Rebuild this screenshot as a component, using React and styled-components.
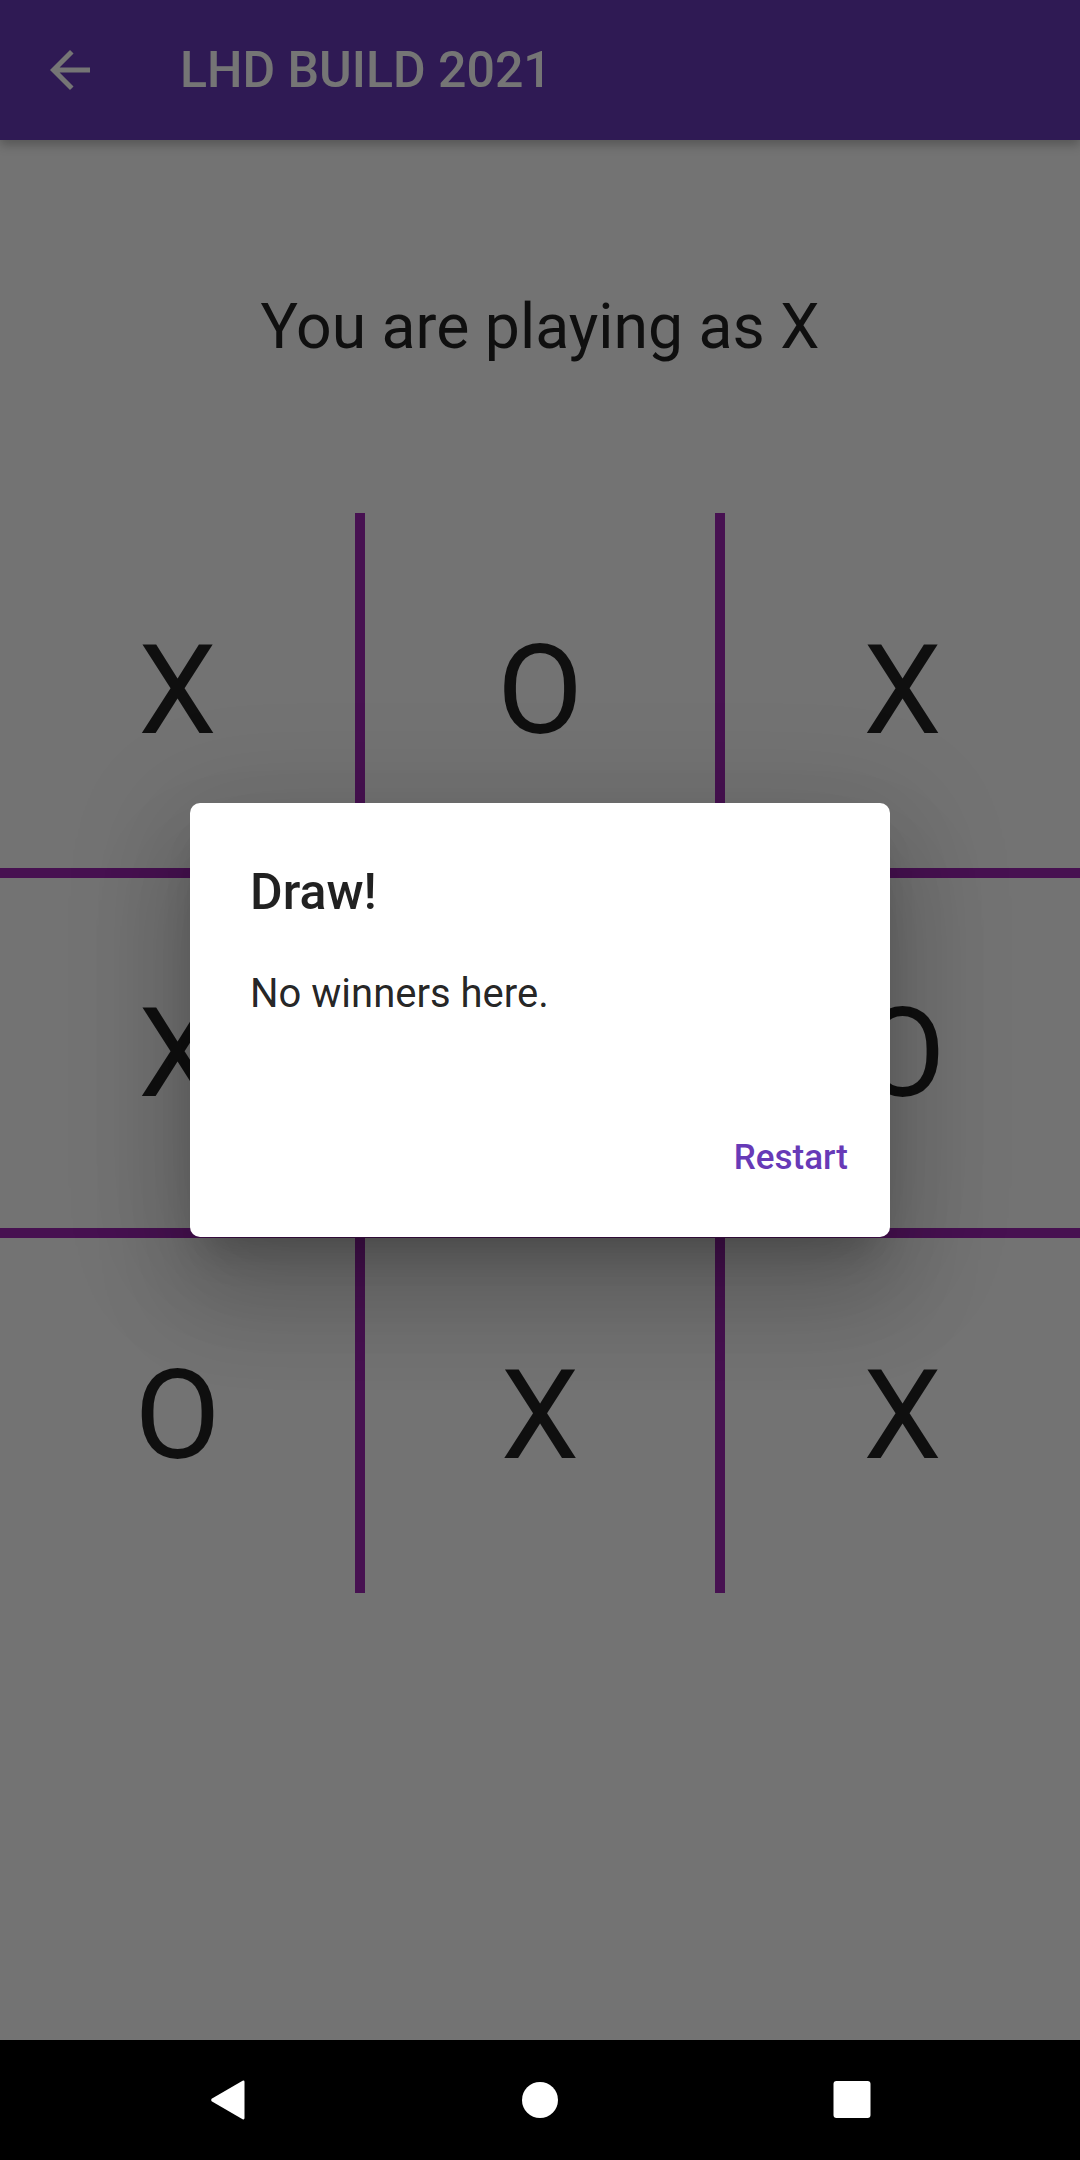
import React from "react";
import styled, { createGlobalStyle } from "styled-components";

const GlobalStyle = createGlobalStyle`
  html, body {
    margin: 0;
    padding: 0;
    background: #000000;
  }
  body {
    font-family: Roboto, "Noto Sans", "Liberation Sans", sans-serif;
  }
`;

// Layout
const Screen = styled.div`
  position: relative;
  width: 1080px;
  height: 2160px;
  display: flex;
  flex-direction: column;
  overflow: hidden;
`;

const AppBar = styled.header`
  height: 140px;
  flex-shrink: 0;
  background-color: #673ab7;
  display: flex;
  align-items: center;
  box-shadow: 0 5px 10px rgba(0, 0, 0, 0.25);
  position: relative;
  z-index: 1;
`;

const BackButton = styled.button`
  width: 60px;
  height: 60px;
  margin-left: 40px;
  padding: 0;
  border: none;
  background: none;
  display: flex;
  color: #ffffff;
`;

const AppTitle = styled.h1`
  margin: 0 0 0 80px;
  font-size: 50px;
  font-weight: 500;
  color: #ffffff;
`;

const Body = styled.main`
  flex: 1;
  background-color: #fafafa;
  display: flex;
  flex-direction: column;
`;

const Status = styled.div`
  height: 373px;
  display: flex;
  align-items: center;
  justify-content: center;
  font-size: 62.5px;
  color: rgba(0, 0, 0, 0.87);
`;

const Board = styled.div`
  display: grid;
  grid-template-columns: repeat(3, 360px);
  grid-template-rows: repeat(3, 360px);
`;

const Cell = styled.div`
  box-sizing: border-box;
  display: flex;
  align-items: center;
  justify-content: center;
  font-size: 125px;
  color: rgba(0, 0, 0, 0.87);
  border: 0 solid #9c27b0;
  border-left-width: ${(p) => (p.col > 0 ? "5px" : "0")};
  border-right-width: ${(p) => (p.col < 2 ? "5px" : "0")};
  border-top-width: ${(p) => (p.row > 0 ? "5px" : "0")};
  border-bottom-width: ${(p) => (p.row < 2 ? "5px" : "0")};
`;

// Dialog
const Scrim = styled.div`
  position: absolute;
  left: 0;
  top: 0;
  width: 1080px;
  height: 2040px;
  background-color: rgba(0, 0, 0, 0.54);
  display: flex;
  align-items: center;
  justify-content: center;
  z-index: 2;
`;

const Dialog = styled.div`
  width: 700px;
  background-color: #ffffff;
  border-radius: 10px;
  box-shadow: 0 27px 37px -17px rgba(0, 0, 0, 0.2),
    0 60px 95px 7px rgba(0, 0, 0, 0.14), 0 22px 115px 20px rgba(0, 0, 0, 0.12);
`;

const DialogTitle = styled.h2`
  margin: 0;
  padding: 60px 60px 0;
  font-size: 50px;
  font-weight: 500;
  line-height: normal;
  color: rgba(0, 0, 0, 0.87);
`;

const DialogContent = styled.p`
  margin: 0;
  padding: 49px 60px 60px;
  font-size: 40px;
  line-height: normal;
  color: rgba(0, 0, 0, 0.87);
`;

const DialogActions = styled.div`
  height: 160px;
  display: flex;
  align-items: center;
  justify-content: flex-end;
  padding-right: 20px;
`;

const TextButton = styled.button`
  border: none;
  background: none;
  padding: 0 22px;
  font-family: Roboto, "Noto Sans", sans-serif;
  font-size: 35px;
  font-weight: 500;
  color: #673ab7;
`;

// System navigation
const NavBar = styled.nav`
  height: 120px;
  flex-shrink: 0;
  background-color: #000000;
  display: flex;
  align-items: center;
  justify-content: center;
  gap: 274px;
`;

const NavIcon = styled.svg`
  width: 38px;
  height: 40px;
  display: block;
`;

const ArrowBack = () => (
  <svg width="60" height="60" viewBox="0 0 24 24" fill="currentColor">
    <path d="M20 11H7.83l5.59-5.59L12 4l-8 8 8 8 1.41-1.41L7.83 13H20v-2z" />
  </svg>
);

const board = [
  ["X", "O", "X"],
  ["X", "O", "O"],
  ["O", "X", "X"],
];

const App = () => {
  return (
    <>
      <GlobalStyle />
      <Screen>
        <AppBar>
          <BackButton aria-label="Back">
            <ArrowBack />
          </BackButton>
          <AppTitle>LHD BUILD 2021</AppTitle>
        </AppBar>

        <Body>
          <Status>You are playing as X</Status>
          <Board>
            {board.map((line, r) =>
              line.map((mark, c) => (
                <Cell key={`${r}-${c}`} row={r} col={c}>
                  {mark}
                </Cell>
              ))
            )}
          </Board>
        </Body>

        <NavBar>
          <NavIcon viewBox="0 0 38 40">
            <path
              d="M2.6 21.3 Q1.6 20 2.6 18.7 L33.6 0.8 Q35.5 0 35.5 2 L35.5 38 Q35.5 40 33.6 39.2 Z"
              fill="#ffffff"
            />
          </NavIcon>
          <NavIcon viewBox="0 0 38 40">
            <circle cx="19" cy="20" r="18" fill="#ffffff" />
          </NavIcon>
          <NavIcon viewBox="0 0 38 40">
            <rect x="0.5" y="1" width="37" height="37" rx="3" fill="#ffffff" />
          </NavIcon>
        </NavBar>

        <Scrim>
          <Dialog role="dialog">
            <DialogTitle>Draw!</DialogTitle>
            <DialogContent>No winners here.</DialogContent>
            <DialogActions>
              <TextButton>Restart</TextButton>
            </DialogActions>
          </Dialog>
        </Scrim>
      </Screen>
    </>
  );
};

export default App;
